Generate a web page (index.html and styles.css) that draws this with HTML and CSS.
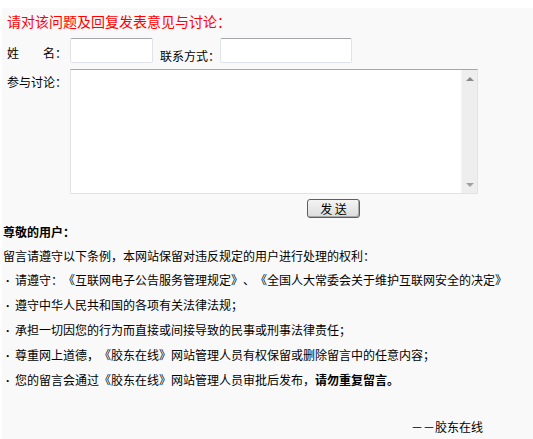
FILE: index.html
```html
<!DOCTYPE html>
<html lang="zh-CN">

<head>
	<meta charset="UTF-8">
	<title>发表意见与讨论</title>
	<link rel="stylesheet" href="styles.css">
</head>

<body>
	<div class="wrap">
		<div class="title">请对该问题及回复发表意见与讨论：</div>
		<form class="form">
			<div class="row">
				<label class="label name-label">姓　　名：</label>
				<input class="text short" type="text">
				<label class="label contact-label">联系方式：</label>
				<input class="text long" type="text">
			</div>
			<div class="row">
				<label class="label">参与讨论：</label>
				<div class="area-box">
					<textarea class="area"></textarea>
					<div class="bar">
						<span class="arrow up"></span>
						<span class="arrow down"></span>
					</div>
				</div>
			</div>
			<div class="submit-row">
				<button class="btn" type="button">发 送</button>
			</div>
		</form>
		<div class="notice">
			<p class="head">尊敬的用户：</p>
			<p>留言请遵守以下条例，本网站保留对违反规定的用户进行处理的权利：</p>
			<p class="item"><span class="dot">·</span>请遵守：《互联网电子公告服务管理规定》、《全国人大常委会关于维护互联网安全的决定》</p>
			<p class="item"><span class="dot">·</span>遵守中华人民共和国的各项有关法律法规；</p>
			<p class="item"><span class="dot">·</span>承担一切因您的行为而直接或间接导致的民事或刑事法律责任；</p>
			<p class="item"><span class="dot">·</span>尊重网上道德，《胶东在线》网站管理人员有权保留或删除留言中的任意内容；</p>
			<p class="item"><span class="dot">·</span>您的留言会通过《胶东在线》网站管理人员审批后发布，<b>请勿重复留言。</b></p>
		</div>
		<div class="sign">－－胶东在线</div>
	</div>
</body>

</html>
```

FILE: styles.css
```css
	/*
	Comment form page.
	*/
	body {
		margin: 0;
		background: #fff;
		font-family: "Noto Sans CJK SC", "Liberation Sans", sans-serif;
		font-size: 12px;
		color: #000;
		text-spacing-trim: space-all;
	}

	.wrap {
		margin: 8px 0 0 2px;
		padding-bottom: 8px;
		background: #f9f9f9;
		min-height: 431px;
		box-sizing: border-box;
	}

	.title {
		padding-left: 5px;
		height: 26px;
		line-height: 26px;
		font-size: 14px;
		color: #f00;
	}

	.form {
		margin: 4px 0 0 5px;
	}

	.row {
		display: flex;
		align-items: flex-start;
		margin-bottom: 6px;
	}

	.label {
		line-height: 14px;
		padding-top: 6px;
		margin-right: 3px;
	}

	.name-label {
		padding-top: 8px;
	}

	.contact-label {
		padding-top: 11px;
		margin-left: 7px;
		margin-right: 0;
	}

	.text,
	.area-box {
		box-sizing: border-box;
		border: 1px solid #e0e4ea;
		border-top-color: #a4a8ae;
		background: #fff;
	}

	.text {
		height: 25px;
		border-radius: 2px;
		font: inherit;
		outline: none;
	}

	.short {
		width: 83px;
	}

	.long {
		width: 132px;
	}

	.area-box {
		display: flex;
		width: 408px;
		height: 125px;
	}

	.area {
		flex: 1;
		border: 0;
		padding: 2px;
		resize: none;
		overflow: hidden;
		background: #fff;
		font: inherit;
		outline: none;
	}

	/*
	Static scrollbar strip, drawn like the classic one.
	*/
	.bar {
		display: flex;
		flex-direction: column;
		justify-content: space-between;
		align-items: center;
		width: 16px;
		padding: 7px 0 6px;
		box-sizing: border-box;
		background: #eeeeee;
		border-left: 1px solid #f5f5f5;
	}

	.arrow {
		width: 0;
		height: 0;
		border-left: 4px solid transparent;
		border-right: 4px solid transparent;
	}

	.up {
		border-bottom: 4px solid #8a8a8a;
	}

	.down {
		border-top: 4px solid #a0a0a0;
	}

	.submit-row {
		margin: -1px 0 0 300px;
	}

	.btn {
		width: 53px;
		height: 19px;
		padding: 0;
		border: 1px solid #5e5e5e;
		border-radius: 3px;
		background: linear-gradient(#f4f4f4, #dcdcdc);
		box-shadow: inset -1px -1px 0 #a8a8a8;
		font: inherit;
		font-size: 12px;
		line-height: 15px;
		color: #000;
	}

	.notice {
		margin-top: 2px;
		padding-left: 1px;
	}

	.notice p {
		margin: 0;
		line-height: 24px;
		white-space: nowrap;
	}

	.head {
		font-weight: bold;
	}

	.dot {
		display: inline-block;
		width: 8px;
		padding-left: 3px;
		margin-right: 1px;
		font-family: "Liberation Sans", sans-serif;
		font-weight: bold;
	}

	.sign {
		margin-top: 22px;
		padding-right: 50px;
		text-align: right;
		line-height: 24px;
	}
```
